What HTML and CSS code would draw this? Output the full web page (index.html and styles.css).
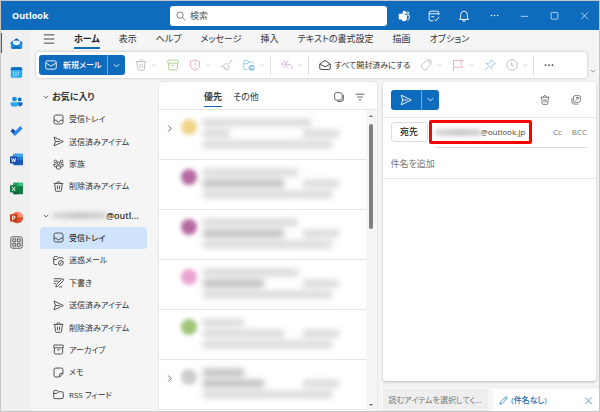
FILE: index.html
```html
<!DOCTYPE html>
<html lang="ja">
<head>
    <meta charset="UTF-8">
    <meta name="viewport" content="width=device-width, initial-scale=1.0">
    <title>Outlook</title>
    <link rel="stylesheet" href="styles.css">
</head>
<body>
    <!-- Icon set -->
    <svg class="sprite" aria-hidden="true">
        <symbol id="i-chevron" viewBox="0 0 8 8"><path d="M1 2.5 4 5.5 7 2.5"/></symbol>
        <symbol id="i-right" viewBox="0 0 8 8"><path d="M2.5 0.5 6 4 2.5 7.5"/></symbol>
        <symbol id="i-search" viewBox="0 0 16 16"><circle cx="6.5" cy="6.5" r="5"/><path d="m10.5 10.5 4.5 4.5"/></symbol>
        <symbol id="i-menu" viewBox="0 0 16 16"><path d="M1 2.5h14M1 8h14M1 13.5h14"/></symbol>
        <symbol id="i-mail" viewBox="0 0 16 16"><rect x="1" y="2.5" width="14" height="11" rx="2"/><path d="m1.500 5.500 6.500 4 6.500-4"/></symbol>
        <symbol id="i-trash" viewBox="0 0 16 16"><path d="M1 3.500h14M5.500 3.500C5.500 0 10.500 0 10.500 3.500M2.500 3.500l1.200 10.500q.2 1 1.300 1h6q1.100 0 1.300-1L13.500 3.500M6.500 6.500v5.500M9.500 6.500v5.500"/></symbol>
        <symbol id="i-archive" viewBox="0 0 16 16"><rect x="1" y="1.500" width="14" height="4" rx="1"/><path d="M2 5.500v7q0 2 2 2h8q2 0 2-2v-7M6 8.500h4"/></symbol>
        <symbol id="i-shield" viewBox="0 0 16 16"><path d="M8 1q3 2 6 2v5q0 5-6 7-6-2-6-7V3q3 0 6-2zM8 4.500v4M8 10.500v1.500"/></symbol>
        <symbol id="i-broom" viewBox="0 0 16 16"><path d="m15 1-5.500 6M6.500 5.500l4.500 4.500q0 4-3.500 5L1 9.500q3.500-.5 5.500-4zM4 11.500l2-1.500M6 13.500l1.500-1.500"/></symbol>
        <symbol id="i-folder" viewBox="0 0 16 16"><path d="M1 4q0-2 2-2h3l2 2h5q2 0 2 2v6q0 2-2 2H3q-2 0-2-2zM1 6.500h4.500L8 4"/></symbol>
        <symbol id="i-movefolder" viewBox="0 0 16 16"><path d="M6 14H3q-2 0-2-2V4q0-2 2-2h3l2 2h4q2 0 2 2M1 6.500h4.500L8 4"/><circle class="solid" cx="11.500" cy="11.500" r="4"/><path class="knock" d="M9.500 11.500h4M12 10l1.500 1.500L12 13"/></symbol>
        <symbol id="i-junk" viewBox="0 0 16 16"><path d="M6 14H3q-2 0-2-2V4q0-2 2-2h3l2 2h5q2 0 2 2M1 6.500h4.500L8 4"/><circle cx="11.500" cy="11.500" r="3.500"/><path d="m9 14 5-5"/></symbol>
        <symbol id="i-reply" viewBox="0 0 16 16"><path d="M6 2 1 7l5 5M10 2 5 7l5 5M5.500 7H9q6 0 6 7"/></symbol>
        <symbol id="i-openmail" viewBox="0 0 16 16"><path d="M1 6.500 8 2l7 4.500V12q0 2-2 2H3q-2 0-2-2zM1.500 7 8 10.500 14.500 7"/></symbol>
        <symbol id="i-tag" viewBox="0 0 16 16"><path d="M9 1.500h5.500V7l-7 7.500q-1 .8-2 0L1.500 10.500q-.8-1 0-2z"/><circle cx="11.500" cy="4.500" r=".6"/></symbol>
        <symbol id="i-flag" viewBox="0 0 16 16"><path d="M2 15.500V2h12.500L11 6.500l3.500 4.500H2"/></symbol>
        <symbol id="i-pin" viewBox="0 0 16 16"><path d="m10 1 5 5-4 2.500-1 4.500-7-7 4.500-1zM6 10l-5 5"/></symbol>
        <symbol id="i-clock" viewBox="0 0 16 16"><circle cx="8" cy="8" r="7"/><path d="M7.500 4v4.500H11"/></symbol>
        <symbol id="i-dots" viewBox="0 0 16 16"><circle class="solid" cx="2.500" cy="8" r="1.400"/><circle class="solid" cx="8" cy="8" r="1.400"/><circle class="solid" cx="13.500" cy="8" r="1.400"/></symbol>
        <symbol id="i-inbox" viewBox="0 0 16 16"><rect x="1.500" y="1.500" width="13" height="13" rx="2.500"/><path d="M1.500 9H5q.5 2.500 3 2.500T11 9h3.500"/></symbol>
        <symbol id="i-send" viewBox="0 0 16 16"><path d="m1.500 1.500 13.500 6.500-13.500 6.500L3.500 8zM3.500 8H10"/></symbol>
        <symbol id="i-family" viewBox="0 0 16 16"><circle cx="8" cy="6" r="2"/><circle cx="3.500" cy="3.500" r="1.800"/><circle cx="12.500" cy="3.500" r="1.800"/><path d="M4.500 10h7q0 5-3.500 5t-3.500-5zM5 7.500H1q0 4 3 4.500M11 7.500h4q0 4-3 4.500"/></symbol>
        <symbol id="i-draft" viewBox="0 0 16 16"><path d="M1 2.500h11M1 6h7M1 9.500h3M4 14.500l1-3.500L13 3q1.500-1 2.200 0t-.2 2.200l-8 8.300zM9 14.500h4"/></symbol>
        <symbol id="i-note" viewBox="0 0 16 16"><path d="M4 1.500h8q2.500 0 2.500 2.500v5.500l-5 5H4q-2.500 0-2.500-2.500V4Q1.500 1.500 4 1.500zM9.500 14.500V11q0-1.500 1.500-1.500h3.500"/></symbol>
        <symbol id="i-select" viewBox="0 0 16 16"><rect x="1" y="1" width="12" height="12" rx="3"/><path d="M15 4.500V12q0 3-3 3H5"/></symbol>
        <symbol id="i-filter" viewBox="0 0 16 16"><path d="M1 3.500h14M3.500 8h9M6 12.500h4"/></symbol>
        <symbol id="i-popout" viewBox="0 0 16 16"><rect x="4" y="1" width="11" height="10.500" rx="2.500"/><path d="M7 8.500 11.500 4M8 4h3.500v3.500M1.500 4.500V11q0 3.500 3.500 3.500h7"/></symbol>
        <symbol id="i-pencil" viewBox="0 0 16 16"><path d="m1.500 14.500 1-4L11.500 2q1.500-1 2.500 0t0 2.500L5.500 13.500zM10 3.500 12.500 6"/></symbol>
        <symbol id="i-teams" viewBox="0 0 16 16"><circle class="solid" cx="8.500" cy="3.500" r="2.500"/><circle cx="13" cy="4" r="1.500"/><path class="solid" d="M6 6.500h6V12q-1 3-4 3-2 0-3-2z"/><path d="M12.500 7H15v4q0 2-2.500 2.500"/><rect class="solid" x="1" y="5" width="7.500" height="7.500" rx="1"/><path class="knock" d="M3 7h3.500M4.800 7v4"/></symbol>
        <symbol id="i-planner" viewBox="0 0 16 16"><path d="M7 14.500H4q-2.500 0-2.500-2.500V4Q1.500 1.500 4 1.500h8q2.500 0 2.500 2.500v2.500M1.500 5h13M8.500 12.500l2 2 4.500-5.500M4.500 9h4"/></symbol>
        <symbol id="i-bell" viewBox="0 0 16 16"><path d="M8 1.500q4.500 0 4.500 5v3l1.500 3H2l1.500-3v-3q0-5 4.500-5zM6 12.500q.3 2.500 2 2.500t2-2.500"/></symbol>
        <symbol id="i-min" viewBox="0 0 16 16"><path d="M1.500 9.500h13"/></symbol>
        <symbol id="i-max" viewBox="0 0 16 16"><rect x="2" y="2.500" width="12" height="12" rx="2"/></symbol>
        <symbol id="i-close" viewBox="0 0 16 16"><path d="m2 2.500 12 12M14 2.500l-12 12"/></symbol>
        <symbol id="i-apps" viewBox="0 0 16 16"><rect x="1" y="1" width="14" height="14" rx="2"/><rect x="3.500" y="3.500" width="3.500" height="3.500"/><rect x="9" y="3.500" width="3.500" height="3.500"/><rect x="3.500" y="9" width="3.500" height="3.500"/><rect x="9" y="9" width="3.500" height="3.500"/></symbol>
    </svg>

    <header class="titlebar">
        <h1>Outlook</h1>
        <label class="search">
            <svg class="icon"><use href="#i-search"/></svg>
            <input type="search" placeholder="検索" aria-label="検索">
        </label>
        <div class="window-tools">
            <button aria-label="Teams"><svg class="icon"><use href="#i-teams"/></svg></button>
            <button aria-label="予定"><svg class="icon"><use href="#i-planner"/></svg></button>
            <button aria-label="通知"><svg class="icon"><use href="#i-bell"/></svg></button>
            <button aria-label="その他"><svg class="icon small"><use href="#i-dots"/></svg></button>
            <button aria-label="最小化"><svg class="icon small"><use href="#i-min"/></svg></button>
            <button aria-label="最大化"><svg class="icon small"><use href="#i-max"/></svg></button>
            <button aria-label="閉じる"><svg class="icon small"><use href="#i-close"/></svg></button>
        </div>
    </header>

    <div class="app">
        <nav class="rail" aria-label="アプリ">
            <a class="active" href="#" aria-label="メール">
                <svg viewBox="0 0 16 16"><path fill="#0a5cad" d="M1 6.500 8 1.500l7 5V9H1z"/><path fill="#fff" d="M3.500 4.500h9V10h-9z"/><path fill="#9bd4f5" d="M4.500 6h7v1h-7z"/><path fill="#1b8fe0" d="M1 6.500 8 10.500l7-4v6q0 2-2 2H3q-2 0-2-2z"/><path fill="#0f6cbd" d="m1.500 14 6.500-4 6.500 4q-.5.500-1.500.500H3q-1 0-1.500-.5z"/></svg>
            </a>
            <a href="#" aria-label="予定表">
                <svg viewBox="0 0 16 16"><rect x="1" y="1.500" width="14" height="13" rx="2" fill="#28a8f0"/><path fill="#0f6cbd" d="M3 1.500h10q2 0 2 2V5H1V3.500q0-2 2-2z"/><path stroke="#d6f0ff" stroke-width="1.500" stroke-dasharray="1.500 1.500" d="M3.500 7.500h9M3.500 10h9M3.500 12.300h5"/></svg>
            </a>
            <a href="#" aria-label="連絡先">
                <svg viewBox="0 0 16 16"><circle cx="5.500" cy="5" r="3" fill="#1490df"/><circle cx="12" cy="5.500" r="2.300" fill="#0f6cbd"/><path fill="#0f6cbd" d="M9 9h5q1.500 0 1.500 1.500 0 3.500-4.500 3.500z"/><path fill="#28a8f0" d="M2 9h7q1.500 0 1.500 1.500 0 4-5 4t-5-4Q.5 9 2 9z"/></svg>
            </a>
            <a href="#" aria-label="To Do">
                <svg viewBox="0 0 16 16"><path fill="#174ea6" d="m.5 8.500 3-3 4.500 4.500-3 3.500z"/><path fill="#2f86ea" d="m12.500 2.500 3 3-8.700 8.700q-.8.500-1.500-.2L3.500 12z"/></svg>
            </a>
            <a href="#" aria-label="Word">
                <svg viewBox="0 0 16 16"><rect x="4" y="1" width="12" height="14" rx="1" fill="#185abd"/><path fill="#41a5ee" d="M4 1h12v4H4z"/><path fill="#2b7cd3" d="M4 5h12v3.500H4z"/><rect y="4" width="9" height="9" rx="1" fill="#184fa8"/><path fill="none" stroke="#fff" d="m2 6 1.200 5L4.500 7l1.300 4L7 6"/></svg>
            </a>
            <a href="#" aria-label="Excel">
                <svg viewBox="0 0 16 16"><rect x="4" y="1" width="12" height="14" rx="1" fill="#107c41"/><path fill="#33c481" d="M10 1h6v4h-6z"/><path fill="#21a366" d="M4 1h6v7H4z"/><path fill="#185c37" d="M4 9h6v6H4z"/><rect y="4" width="9" height="9" rx="1" fill="#107c41"/><path fill="none" stroke="#fff" stroke-width="1.200" d="m2.500 6 4 5M6.500 6l-4 5"/></svg>
            </a>
            <a href="#" aria-label="PowerPoint">
                <svg viewBox="0 0 16 16"><circle cx="9" cy="8" r="7" fill="#ed6c47"/><path fill="#ff8f6b" d="M9 1q7 .5 7 7H9z"/><path fill="#d35230" d="M2 8h14q-.5 7-7 7T2 8z"/><rect y="4" width="9" height="9" rx="1" fill="#c43e1c"/><path fill="none" stroke="#fff" stroke-width="1.200" d="M3.200 11V6.300h1.500q1.600 0 1.600 1.400T4.700 9.200H3.200"/></svg>
            </a>
            <a class="more-apps" href="#" aria-label="その他のアプリ"><svg class="icon"><use href="#i-apps"/></svg></a>
        </nav>

        <div class="main">
            <nav class="tabs" aria-label="リボン">
                <button aria-label="メニュー"><svg class="icon"><use href="#i-menu"/></svg></button>
                <button class="active">ホーム</button>
                <button>表示</button>
                <button>ヘルプ</button>
                <button>メッセージ</button>
                <button>挿入</button>
                <button>テキストの書式設定</button>
                <button>描画</button>
                <button>オプション</button>
            </nav>

            <div class="ribbon-row">
                <div class="ribbon">
                    <div class="split">
                        <button class="new-mail"><svg class="icon"><use href="#i-mail"/></svg>新規メール</button>
                        <button class="drop" aria-label="新規の種類"><svg class="chev"><use href="#i-chevron"/></svg></button>
                    </div>
                    <button class="tool gray" aria-label="削除"><svg class="icon"><use href="#i-trash"/></svg><svg class="chev"><use href="#i-chevron"/></svg></button>
                    <button class="tool green" aria-label="アーカイブ"><svg class="icon"><use href="#i-archive"/></svg></button>
                    <button class="tool red" aria-label="報告"><svg class="icon"><use href="#i-shield"/></svg><svg class="chev"><use href="#i-chevron"/></svg></button>
                    <button class="tool gray" aria-label="整理"><svg class="icon"><use href="#i-broom"/></svg></button>
                    <button class="tool blue" aria-label="移動"><svg class="icon"><use href="#i-movefolder"/></svg><svg class="chev"><use href="#i-chevron"/></svg></button>
                    <span class="sep"></span>
                    <button class="tool purple" aria-label="全員に返信"><svg class="icon"><use href="#i-reply"/></svg><svg class="chev"><use href="#i-chevron"/></svg></button>
                    <span class="sep"></span>
                    <button class="tool mark-read"><svg class="icon"><use href="#i-openmail"/></svg>すべて開封済みにする</button>
                    <button class="tool gray" aria-label="分類"><svg class="icon"><use href="#i-tag"/></svg><svg class="chev"><use href="#i-chevron"/></svg></button>
                    <button class="tool red" aria-label="フラグ"><svg class="icon"><use href="#i-flag"/></svg><svg class="chev"><use href="#i-chevron"/></svg></button>
                    <button class="tool blue" aria-label="ピン留め"><svg class="icon"><use href="#i-pin"/></svg></button>
                    <button class="tool gray" aria-label="再通知"><svg class="icon"><use href="#i-clock"/></svg><svg class="chev"><use href="#i-chevron"/></svg></button>
                    <span class="sep"></span>
                    <button class="tool" aria-label="その他のオプション"><svg class="icon small"><use href="#i-dots"/></svg></button>
                </div>
                <button class="collapse" aria-label="リボンを折りたたむ"><svg class="chev"><use href="#i-chevron"/></svg></button>
            </div>

            <div class="panes">
                <aside class="folders">
                    <h2><svg class="chev"><use href="#i-chevron"/></svg>お気に入り</h2>
                    <ul>
                        <li><a href="#"><svg class="icon"><use href="#i-inbox"/></svg>受信トレイ</a></li>
                        <li><a href="#"><svg class="icon"><use href="#i-send"/></svg>送信済みアイテム</a></li>
                        <li><a href="#"><svg class="icon"><use href="#i-family"/></svg>家族</a></li>
                        <li><a href="#"><svg class="icon"><use href="#i-trash"/></svg>削除済みアイテム</a></li>
                    </ul>
                    <h2 class="account"><svg class="chev"><use href="#i-chevron"/></svg><span><span class="masked"></span>@outl...</span></h2>
                    <ul class="account-folders">
                        <li><a class="selected" href="#"><svg class="icon"><use href="#i-inbox"/></svg>受信トレイ</a></li>
                        <li><a href="#"><svg class="icon"><use href="#i-junk"/></svg>迷惑メール</a></li>
                        <li><a href="#"><svg class="icon"><use href="#i-draft"/></svg>下書き</a></li>
                        <li><a href="#"><svg class="icon"><use href="#i-send"/></svg>送信済みアイテム</a></li>
                        <li><a href="#"><svg class="icon"><use href="#i-trash"/></svg>削除済みアイテム</a></li>
                        <li><a href="#"><svg class="icon"><use href="#i-archive"/></svg>アーカイブ</a></li>
                        <li><a href="#"><svg class="icon"><use href="#i-note"/></svg>メモ</a></li>
                        <li><a href="#"><svg class="icon"><use href="#i-folder"/></svg>RSS フィード</a></li>
                    </ul>
                </aside>

                <section class="messages">
                    <div class="list-head">
                        <button class="active">優先</button>
                        <button>その他</button>
                        <button class="list-tool" aria-label="選択"><svg class="icon"><use href="#i-select"/></svg></button>
                        <button aria-label="フィルター"><svg class="icon"><use href="#i-filter"/></svg></button>
                    </div>
                    <div class="list-body">
                        <!-- Senders and subjects are hidden behind a blur -->
                        <ul>
                            <li>
                                <svg class="chev"><use href="#i-right"/></svg>
                                <span class="avatar yellow"></span>
                                <div class="lines"><i class="w-80"></i><div><i class="w-20"></i><i class="date"></i></div><i class="w-95"></i></div>
                            </li>
                            <li>
                                <span class="avatar plum"></span>
                                <div class="lines"><i class="w-70"></i><div><i class="w-60 dark"></i><i class="date"></i></div><i class="w-95"></i></div>
                            </li>
                            <li>
                                <span class="avatar plum"></span>
                                <div class="lines"><i class="w-70"></i><div><i class="w-60 dark"></i><i class="date"></i></div><i class="w-95"></i></div>
                            </li>
                            <li>
                                <span class="avatar pink"></span>
                                <div class="lines"><i class="w-70"></i><div><i class="w-45 dark"></i><i class="date"></i></div><i class="w-95"></i></div>
                            </li>
                            <li>
                                <span class="avatar olive"></span>
                                <div class="lines"><i class="w-30"></i><div><i class="w-60"></i><i class="date"></i></div><i class="w-95"></i></div>
                            </li>
                            <li>
                                <svg class="chev"><use href="#i-right"/></svg>
                                <span class="avatar silver"></span>
                                <div class="lines"><i class="w-30 dark"></i><div><i class="w-45 dark"></i><i class="date"></i></div><i class="w-95"></i></div>
                            </li>
                        </ul>
                        <div class="scrollbar">
                            <span class="arrow-up"></span>
                            <span class="thumb"></span>
                            <span class="arrow-down"></span>
                        </div>
                    </div>
                </section>

                <section class="reading">
                    <form class="compose">
                        <div class="compose-head">
                            <div class="split">
                                <button type="button" class="send" aria-label="送信"><svg class="icon"><use href="#i-send"/></svg></button>
                                <button type="button" class="drop" aria-label="送信オプション"><svg class="chev"><use href="#i-chevron"/></svg></button>
                            </div>
                            <button type="button" class="discard" aria-label="破棄"><svg class="icon small"><use href="#i-trash"/></svg></button>
                            <button type="button" aria-label="新しいウィンドウ"><svg class="icon small"><use href="#i-popout"/></svg></button>
                        </div>
                        <div class="recipients">
                            <button type="button" class="to">宛先</button>
                            <div class="address"><span class="masked"></span>@outlook.jp</div>
                            <button type="button" class="cc">Cc</button>
                            <button type="button" class="bcc">BCC</button>
                        </div>
                        <hr>
                        <input class="subject" type="text" placeholder="件名を追加" aria-label="件名">
                        <div class="mail-body"></div>
                    </form>
                    <div class="item-tabs">
                        <button>読むアイテムを選択してく...</button>
                        <button class="active"><svg class="icon"><use href="#i-pencil"/></svg>(件名なし)<svg class="icon close"><use href="#i-close"/></svg></button>
                    </div>
                </section>
            </div>
        </div>
    </div>
</body>
</html>
```
FILE: styles.css
```css
* {
    box-sizing: border-box;
}
body {
    display: flex;
    flex-direction: column;
    height: 100vh;
    margin: 0;
    border: 1px solid #c6c6c6;
    background: #f5f5f5;
    color: #333;
    font-family: "Open Sans", "Noto Sans CJK JP", sans-serif;
    font-size: 9px;
    line-height: 12px;
    font-feature-settings: "palt";
    overflow: hidden;
}
h1, h2, ul {
    margin: 0;
    padding: 0;
    list-style: none;
}
a {
    color: inherit;
    text-decoration: none;
}
button, input {
    margin: 0;
    padding: 0;
    border: none;
    background: none;
    color: inherit;
    font: inherit;
    font-feature-settings: inherit;
}
button {
    display: flex;
    align-items: center;
    justify-content: center;
    white-space: nowrap;
}
input:focus {
    outline: none;
}

/* Icons */
.sprite {
    display: none;
}
.icon, .chev {
    flex: none;
    width: 12px;
    height: 12px;
    fill: none;
    stroke: currentColor;
    stroke-width: 1.2;
    stroke-linejoin: round;
}
.icon.small {
    width: 10px;
    height: 10px;
}
.chev {
    width: 6px;
    height: 6px;
    stroke-width: 1;
}
.solid {
    fill: currentColor;
    stroke: none;
}
.knock {
    stroke: #fff;
}

/* Title bar */
.titlebar {
    display: flex;
    flex: none;
    align-items: center;
    height: 29px;
    padding-left: 11px;
    background: #0f6cbd;
    color: #fff;
}
h1 {
    width: 158px;
    font-size: 9px;
    font-weight: 700;
}
.search {
    display: flex;
    flex: 1;
    align-items: center;
    gap: 4px;
    height: 20px;
    padding: 0 6px;
    border-radius: 3px;
    background: #fff;
    color: #555;
}
.search .icon {
    width: 10px;
    height: 10px;
}
.search input {
    flex: 1;
    min-width: 0;
}
input::placeholder {
    color: #555;
    opacity: 1;
}
.window-tools {
    display: flex;
    margin-left: 2px;
}
.window-tools button {
    width: 30px;
    height: 29px;
}
.window-tools .small {
    width: 9px;
    height: 9px;
}
.window-tools .knock {
    stroke: #0f6cbd;
}

/* App rail */
.app {
    display: flex;
    flex: 1;
    min-height: 0;
}
.rail {
    flex: none;
    width: 30px;
    background: #efefef;
}
.rail a {
    display: flex;
    align-items: center;
    height: 20px;
    margin: 3px 0 9px;
    padding-left: 8px;
    border-left: 1px solid transparent;
}
.rail a.active {
    border-color: #0f6cbd;
}
.rail svg {
    width: 13px;
    height: 13px;
}
.rail .more-apps {
    margin-top: -4px;
    color: #555;
}

/* Ribbon */
.main {
    display: flex;
    flex: 1;
    flex-direction: column;
    min-width: 0;
}
.tabs {
    display: flex;
    flex: none;
    gap: 19px;
    height: 19px;
    margin-bottom: 3px;
    padding: 1px 0 0 12px;
}
.tabs button {
    border-bottom: 2px solid transparent;
}
.tabs button.active {
    border-color: #0f6cbd;
    color: #222;
    font-weight: 700;
}
.ribbon-row {
    display: flex;
    flex: none;
    align-items: flex-end;
    margin-left: 5px;
}
.ribbon {
    display: flex;
    flex: 1;
    align-items: center;
    gap: 10px;
    min-width: 0;
    padding: 3px;
    border-radius: 3px;
    background: #fff;
    box-shadow: 0 0 3px rgba(0, 0, 0, 0.25);
    font-size: 8px;
}
.split {
    display: flex;
    height: 20px;
    border-radius: 3px;
    background: #0f6cbd;
    color: #fff;
}
.drop {
    width: 18px;
    border-left: 1px solid #6fa8da;
}
.drop .chev {
    width: 7px;
    height: 7px;
}
.new-mail {
    gap: 6px;
    padding: 0 6px;
    font-weight: 500;
}
.tool {
    gap: 4px;
}
.tool .chev {
    color: #ccc;
}
.mark-read {
    gap: 3px;
}
.gray {
    color: #bbb;
}
.green {
    color: #a9d08c;
}
.red {
    color: #eba9ae;
}
.blue {
    color: #8ec3ee;
}
.purple {
    color: #d3a5d8;
}
.sep {
    width: 1px;
    height: 19px;
    margin-left: -5px;
    background: #ddd;
}
.collapse {
    width: 12px;
    height: 14px;
    color: #777;
}

/* Folder list */
.panes {
    display: flex;
    flex: 1;
    min-height: 0;
    padding-top: 4px;
}
.folders {
    display: flex;
    flex: none;
    flex-direction: column;
    width: 128px;
    padding: 4px 12px 5px 9px;
}
h2 {
    display: flex;
    flex: none;
    align-items: center;
    gap: 3px;
    height: 22px;
    padding-left: 3px;
    font-size: 9px;
    font-weight: 600;
    white-space: nowrap;
}
.folders ul {
    display: flex;
    flex: 4;
    flex-direction: column;
    font-size: 8px;
}
.folders .account-folders {
    flex: 8;
}
.folders li {
    display: flex;
    flex: 1;
}
.folders li a {
    display: flex;
    flex: 1;
    align-items: center;
    gap: 5px;
    padding-left: 13px;
    border-radius: 3px;
    white-space: nowrap;
}
.folders li a.selected {
    background: #cfe4fa;
    font-weight: 500;
}
.folders .icon {
    width: 11px;
    height: 11px;
}
.account {
    margin-top: 7px;
}
.masked {
    display: inline-block;
    width: 54px;
    height: 7px;
    background: linear-gradient(to right, #ddd, #c6c6c6, #d4d4d4);
    filter: blur(2px);
}

/* Message list */
.messages {
    display: flex;
    flex: none;
    flex-direction: column;
    width: 38.3%;
    margin-right: 6px;
    border-radius: 3px 3px 0 0;
    background: #fff;
    box-shadow: 0 0 2px rgba(0, 0, 0, 0.2);
}
.list-head {
    display: flex;
    flex: none;
    gap: 11px;
    height: 28px;
    padding: 6px 12px 2px 45px;
    border-bottom: 1px solid #e6e6e6;
}
.list-head button {
    border-bottom: 1px solid transparent;
}
.list-head button.active {
    border-color: #0f6cbd;
    font-weight: 700;
}
.list-head .icon {
    width: 10px;
    height: 10px;
}
.list-tool {
    margin-left: auto;
}
.list-body {
    display: flex;
    flex: 1;
    min-height: 0;
}
.list-body ul {
    flex: 1;
    overflow: hidden;
}
.list-body li {
    display: flex;
    gap: 6px;
    height: 50px;
    padding: 9px 27px 8px 22px;
    border-bottom: 1px solid #e6e6e6;
}
.list-body li .chev {
    width: 7px;
    height: 7px;
    margin: 6px 2px 0 -15px;
    color: #555;
}
.avatar {
    flex: none;
    width: 16px;
    height: 16px;
    border-radius: 50%;
    filter: blur(2px);
}
.yellow {
    background: #f0d48c;
}
.plum {
    background: #b569a0;
}
.pink {
    background: #eaa2d2;
}
.olive {
    background: #9fc477;
}
.silver {
    background: #ccc;
}
.lines {
    flex: 1;
    filter: blur(3px);
}
.lines div {
    display: flex;
    justify-content: space-between;
}
.lines i {
    display: block;
    height: 7px;
    margin-bottom: 4px;
    background: #d6d6d6;
}
.lines i.dark {
    background: #b8b8b8;
}
.lines i.date {
    width: 36px;
}
.w-20 {
    width: 20%;
}
.w-30 {
    width: 30%;
}
.w-45 {
    width: 45%;
}
.w-60 {
    width: 60%;
}
.w-70 {
    width: 70%;
}
.w-80 {
    width: 80%;
}
.w-95 {
    width: 95%;
}
.scrollbar {
    display: flex;
    flex-direction: column;
    align-items: center;
    width: 11px;
    padding: 5px 0;
    background: #f5f5f5;
}
.arrow-up, .arrow-down {
    border: 2px solid transparent;
    border-top: none;
    border-bottom-color: #666;
}
.arrow-down {
    margin-top: auto;
    transform: rotate(180deg);
}
.thumb {
    width: 4px;
    height: 36%;
    margin-top: 7px;
    border-radius: 2px;
    background: #808080;
}

/* Compose pane */
.reading {
    display: flex;
    flex: 1;
    flex-direction: column;
    min-width: 0;
}
.compose {
    display: flex;
    flex: 1;
    flex-direction: column;
    margin-right: 3px;
    border-radius: 3px;
    background: #fff;
    box-shadow: 0 1px 3px rgba(0, 0, 0, 0.25);
}
.compose-head {
    display: flex;
    align-items: center;
    height: 36px;
    padding: 0 15px 0 8px;
    border-bottom: 1px solid #e6e6e6;
    color: #555;
}
.send {
    width: 30px;
}
.discard {
    margin: 0 21px 0 auto;
}
.recipients {
    display: flex;
    align-items: center;
    padding: 2px 9px 0 8px;
    color: #777;
}
.to {
    width: 37px;
    height: 20px;
    border: 1px solid #ddd;
    border-radius: 3px;
    color: #222;
    font-weight: 500;
}
.address {
    display: flex;
    align-items: center;
    height: 24px;
    margin-left: 1px;
    padding: 0 4px 0 3px;
    border: 3px solid #f00;
    border-radius: 2px;
    color: #444;
    font-size: 8px;
}
.address .masked {
    width: 46px;
}
.cc, .bcc {
    font-size: 8px;
}
.cc {
    margin: 0 10px 0 auto;
}
hr {
    flex: none;
    height: 1px;
    margin: 3px 8px 0 52px;
    border: none;
    background: #ddd;
}
.subject {
    height: 31px;
    padding-left: 8px;
    border-bottom: 1px solid #e6e6e6;
}
.subject::placeholder {
    color: #777;
}
.mail-body {
    flex: 1;
}
.item-tabs {
    display: flex;
    flex: none;
    gap: 5px;
    height: 25px;
    margin-top: 5px;
    padding-top: 2px;
    border-top: 1px solid #eee;
    color: #777;
    font-size: 8px;
}
.item-tabs button {
    flex: 1;
    justify-content: flex-start;
    padding: 0 6px;
    background: #eee;
}
.item-tabs button.active {
    gap: 3px;
    background: #fff;
    color: #0f6cbd;
    font-weight: 500;
}
.item-tabs .icon {
    width: 9px;
    height: 9px;
}
.item-tabs .close {
    margin-left: auto;
}
```
